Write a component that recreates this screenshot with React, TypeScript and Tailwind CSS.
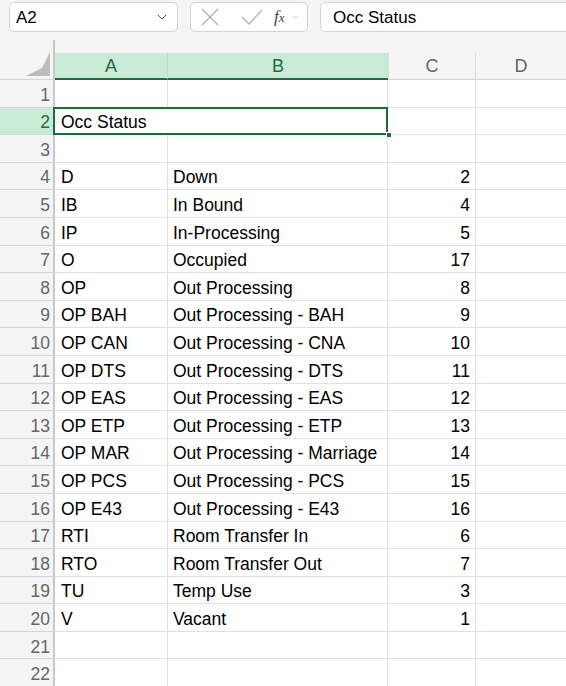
import { ChevronDown } from "lucide-react";

type Row = { a?: string; b?: string; c?: number };

const rows: Row[] = [
  {},
  { a: "Occ Status" },
  {},
  { a: "D", b: "Down", c: 2 },
  { a: "IB", b: "In Bound", c: 4 },
  { a: "IP", b: "In-Processing", c: 5 },
  { a: "O", b: "Occupied", c: 17 },
  { a: "OP", b: "Out Processing", c: 8 },
  { a: "OP BAH", b: "Out Processing - BAH", c: 9 },
  { a: "OP CAN", b: "Out Processing - CNA", c: 10 },
  { a: "OP DTS", b: "Out Processing - DTS", c: 11 },
  { a: "OP EAS", b: "Out Processing - EAS", c: 12 },
  { a: "OP ETP", b: "Out Processing - ETP", c: 13 },
  { a: "OP MAR", b: "Out Processing - Marriage", c: 14 },
  { a: "OP PCS", b: "Out Processing - PCS", c: 15 },
  { a: "OP E43", b: "Out Processing - E43", c: 16 },
  { a: "RTI", b: "Room Transfer In", c: 6 },
  { a: "RTO", b: "Room Transfer Out", c: 7 },
  { a: "TU", b: "Temp Use", c: 3 },
  { a: "V", b: "Vacant", c: 1 },
  {},
  {},
];

export default function App() {
  return (
    <div
      className="w-[566px] h-[686px] overflow-hidden bg-[#f5f5f5] text-black"
      style={{ fontFamily: '"Liberation Sans", Arial, sans-serif' }}
    >
      {/* formula bar */}
      <div className="flex h-[40px] items-start pt-[2px] pl-[9px] gap-[12px]">
        <div className="flex h-[30px] w-[169px] items-center justify-between rounded-[5px] border border-[#d4d4d4] bg-white pl-[6px] pr-[7px] text-[17px]">
          <span className="pt-[1px]">A2</span>
          <ChevronDown size={16} strokeWidth={1.4} className="text-[#444]" />
        </div>
        <div className="flex h-[30px] w-[118px] items-center rounded-[5px] border border-[#d4d4d4] bg-white pl-[10px] text-[#b0b0b0]">
          <svg width="18" height="18" viewBox="0 0 18 18" fill="none" stroke="currentColor" strokeWidth="1.3">
            <path d="M1 1 L17 17 M17 1 L1 17" />
          </svg>
          <svg width="22" height="16" viewBox="0 0 22 16" fill="none" stroke="currentColor" strokeWidth="1.3" className="ml-[22px]">
            <path d="M1 8 L8 15 L21 1" />
          </svg>
          <span
            className="ml-[11px] text-[17px] italic text-[#444]"
            style={{ fontFamily: '"Liberation Serif", serif' }}
          >
            f<span className="text-[13px]">x</span>
          </span>
          <ChevronDown size={9} strokeWidth={1.5} className="ml-[6px] text-[#999]" />
        </div>
        <div className="flex h-[30px] flex-1 items-center rounded-l-[5px] border border-r-0 border-[#d4d4d4] bg-white pl-[12px] text-[17px]">
          <span className="pt-[1px]">Occ Status</span>
        </div>
      </div>

      {/* column headers */}
      <div className="flex h-[40px]">
        <div className="relative w-[55px] shrink-0 border-r-2 border-[#c8c8c8] border-b border-b-[#d6d6d6]">
          <div className="absolute bottom-[3px] right-[3px] h-0 w-0 border-l-[16px] border-t-[16px] border-l-transparent border-t-transparent border-b-[#bdbdbd] border-r-[#bdbdbd] border-b-[8px] border-r-[8px]" />
        </div>
        <div className="flex flex-1 flex-col">
          <div className="h-[13px]" />
          <div className="flex h-[27px] text-[18px]">
            <div className="flex w-[113px] items-center justify-center border-r border-[#b9dcc6] border-b-2 border-b-[#1e6b3c] bg-[#caead8] pt-[1px] text-[#1e6b3c]">
              A
            </div>
            <div className="flex w-[220px] items-center justify-center border-b-2 border-b-[#1e6b3c] bg-[#caead8] pt-[1px] text-[#1e6b3c]">
              B
            </div>
            <div className="flex w-[88px] items-center justify-center border-l border-r border-[#dadada] border-b border-b-[#d6d6d6] pt-[1px] text-[#666]">
              C
            </div>
            <div className="flex flex-1 items-center justify-center border-b border-[#d6d6d6] pt-[1px] text-[#666]">
              D
            </div>
          </div>
        </div>
      </div>

      {/* grid rows */}
      <div className="flex flex-col">
        {rows.map((r, i) => {
          const sel = i === 1;
          return (
            <div key={i} className="flex h-[27.6px] text-[17.5px]">
              <div
                className={
                  sel
                    ? "flex w-[55px] shrink-0 items-center justify-end border-r-2 border-r-[#1e6b3c] border-b border-b-[#d6d6d6] bg-[#caead8] pr-[3px] pt-[3px] text-[#1e6b3c]"
                    : "flex w-[55px] shrink-0 items-center justify-end border-r-2 border-r-[#c8c8c8] border-b border-b-[#d6d6d6] pr-[3px] pt-[3px] text-[#666]"
                }
              >
                {i + 1}
              </div>
              {sel ? (
                <div className="relative flex w-[333px] items-center border-b border-[#e1e1e1] bg-white pl-[6px] pt-[3px]">
                  {r.a}
                  <div className="absolute -left-[2px] -top-[1px] h-[28.6px] w-[335px] border-2 border-[#1e6b3c]" />
                  <div className="absolute -bottom-[4px] -right-[4px] h-[6px] w-[6px] border border-white bg-[#1e6b3c]" />
                </div>
              ) : (
                <>
                  <div className="flex w-[113px] items-center overflow-hidden whitespace-nowrap border-r border-b border-[#e1e1e1] bg-white pl-[6px] pt-[3px]">
                    {r.a}
                  </div>
                  <div className="flex w-[220px] items-center overflow-hidden whitespace-nowrap border-r border-b border-[#e1e1e1] bg-white pl-[5px] pt-[3px]">
                    {r.b}
                  </div>
                </>
              )}
              <div className="flex w-[88px] items-center justify-end border-r border-b border-[#e1e1e1] bg-white pr-[5px] pt-[3px]">
                {r.c}
              </div>
              <div className="flex-1 border-b border-[#e1e1e1] bg-white" />
            </div>
          );
        })}
      </div>
    </div>
  );
}
